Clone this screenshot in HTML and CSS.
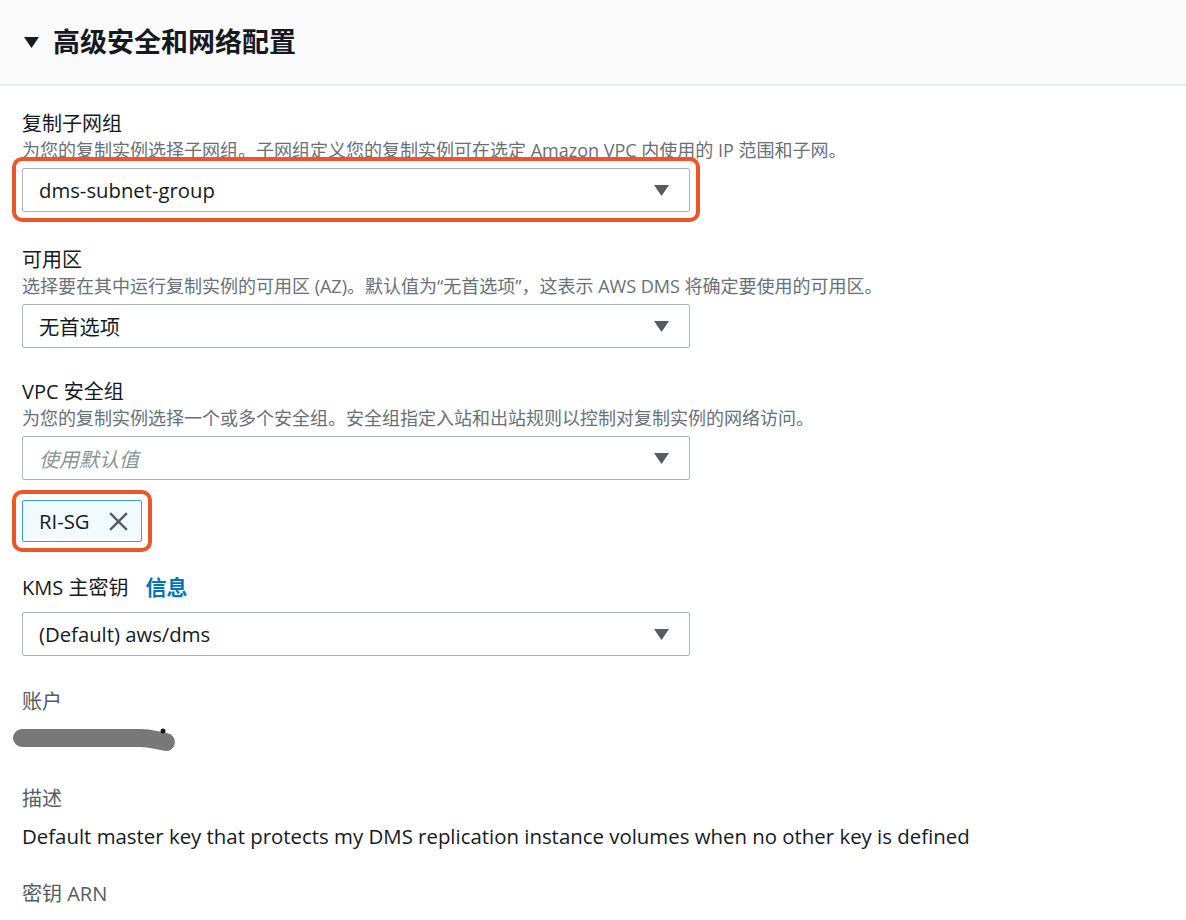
FILE: index.html
```html
<!DOCTYPE html>
<html lang="zh-CN">
<head>
<meta charset="utf-8">
<link rel="stylesheet" href="styles.css">
</head>
<body>
<div class="panel">
  <div class="panel-header">
    <svg class="caret-down" width="15" height="11" viewBox="0 0 15 11"><path d="M0 0 H15 L7.5 11 Z" fill="#16191f"/></svg>
    <h2 class="panel-title">高级安全和网络配置</h2>
  </div>
  <div class="panel-body">
    <div class="field f1">
      <div class="label">复制子网组</div>
      <div class="desc">为您的复制实例选择子网组。子网组定义您的复制实例可在选定 Amazon VPC 内使用的 IP 范围和子网。</div>
      <div class="mark-wrap">
        <div class="select"><span class="value">dms-subnet-group</span><svg class="arrow" width="15" height="11" viewBox="0 0 15 11"><path d="M0 0 H15 L7.5 11 Z" fill="#545b64"/></svg></div>
        <div class="ring ring-select"></div>
      </div>
    </div>
    <div class="field f2">
      <div class="label">可用区</div>
      <div class="desc">选择要在其中运行复制实例的可用区 (AZ)。默认值为“无首选项”，这表示 AWS DMS 将确定要使用的可用区。</div>
      <div class="select"><span class="value">无首选项</span><svg class="arrow" width="15" height="11" viewBox="0 0 15 11"><path d="M0 0 H15 L7.5 11 Z" fill="#545b64"/></svg></div>
    </div>
    <div class="field f3">
      <div class="label">VPC 安全组</div>
      <div class="desc">为您的复制实例选择一个或多个安全组。安全组指定入站和出站规则以控制对复制实例的网络访问。</div>
      <div class="select"><span class="value placeholder">使用默认值</span><svg class="arrow" width="15" height="11" viewBox="0 0 15 11"><path d="M0 0 H15 L7.5 11 Z" fill="#545b64"/></svg></div>
      <div class="token-row">
        <div class="mark-wrap">
          <div class="token"><span>RI-SG</span><svg class="x" width="21" height="21" viewBox="0 0 20 20"><path d="M2 2 L18 18 M18 2 L2 18" stroke="#545b64" stroke-width="2.2" fill="none"/></svg></div>
          <div class="ring ring-token"></div>
        </div>
      </div>
    </div>
    <div class="field f4">
      <div class="label">KMS 主密钥 <a class="info">信息</a></div>
      <div class="select"><span class="value">(Default) aws/dms</span><svg class="arrow" width="15" height="11" viewBox="0 0 15 11"><path d="M0 0 H15 L7.5 11 Z" fill="#545b64"/></svg></div>
    </div>
    <div class="field f5">
      <div class="label muted">账户</div>
      <svg class="scribble" width="180" height="30" viewBox="0 0 180 30"><path d="M22 14 H140 C150 14 155 16 166 18" stroke="#787878" stroke-width="18" stroke-linecap="round" fill="none"/><circle cx="163" cy="7" r="2.5" fill="#16191f"/></svg>
    </div>
    <div class="field f6">
      <div class="label muted">描述</div>
      <div class="text">Default master key that protects my DMS replication instance volumes when no other key is defined</div>
    </div>
    <div class="field f7">
      <div class="label muted">密钥 ARN</div>
    </div>
  </div>
</div>
</body>
</html>
```

FILE: styles.css
```css
* { box-sizing: border-box; }
html, body { margin: 0; padding: 0; background: #fff; }
body {
  font-family: "Open Sans", "Noto Sans CJK SC", sans-serif;
  color: #16191f;
  width: 1186px;
  height: 920px;
  overflow: hidden;
}
.panel-header {
  height: 86px;
  background: #fafafa;
  border-bottom: 2px solid #eaeded;
  display: flex;
  align-items: center;
  padding-left: 24px;
  gap: 14px;
}
.caret-down { flex: none; margin-top: 0; }
.panel-title {
  margin: 0;
  font-size: 27px;
  font-weight: 700;
  line-height: 34px;
  color: #16191f;
}
.panel-body { padding: 0 22px; }
.field { display: flex; flex-direction: column; align-items: flex-start; }
.label { font-size: 20px; line-height: 28px; color: #16191f; }
.label.muted { color: #545b64; }
.desc { font-size: 18px; line-height: 24px; color: #687078; margin-bottom: 6px; white-space: nowrap; }
.info { color: #0073bb; font-weight: 700; margin-left: 12px; font-size: 21px; }
.select {
  width: 668px;
  height: 44px;
  border: 1px solid #aab7b8;
  border-radius: 2px;
  background: #fff;
  display: flex;
  align-items: center;
  justify-content: space-between;
  padding: 0 20px 0 16px;
}
.value { font-size: 20.3px; color: #16191f; }
.placeholder { color: #879596; font-style: italic; font-size: 20px; }
.arrow { flex: none; }
.mark-wrap { position: relative; }
.ring {
  position: absolute;
  border: 4px solid #ee5527;
  border-radius: 10px;
  pointer-events: none;
}
.ring-select { left: -10px; top: -11px; right: -10px; bottom: -10px; }
.ring-token { left: -10px; top: -10px; right: -10px; bottom: -10px; }
.token-row { margin-top: 20px; }
.token {
  height: 42px;
  display: flex;
  align-items: center;
  gap: 18px;
  padding: 0 12px 0 16px;
  background: #f1faff;
  border: 1px solid #3aa0cf;
  border-radius: 2px;
  font-size: 20.3px;
  color: #16191f;
}
.f1 { padding-top: 24px; }
.f2 { padding-top: 34px; }
.f3 { padding-top: 30px; }
.f4 { padding-top: 31px; }
.f4 .label { margin-bottom: 10px; }
.f5 { padding-top: 32px; }
.scribble { margin-left: -22px; margin-top: 8px; }
.f6 { padding-top: 31px; }
.f6 .label { margin-bottom: 9px; }
.text { font-size: 20.4px; line-height: 28px; color: #16191f; white-space: nowrap; }
.f7 { padding-top: 30px; }
```
